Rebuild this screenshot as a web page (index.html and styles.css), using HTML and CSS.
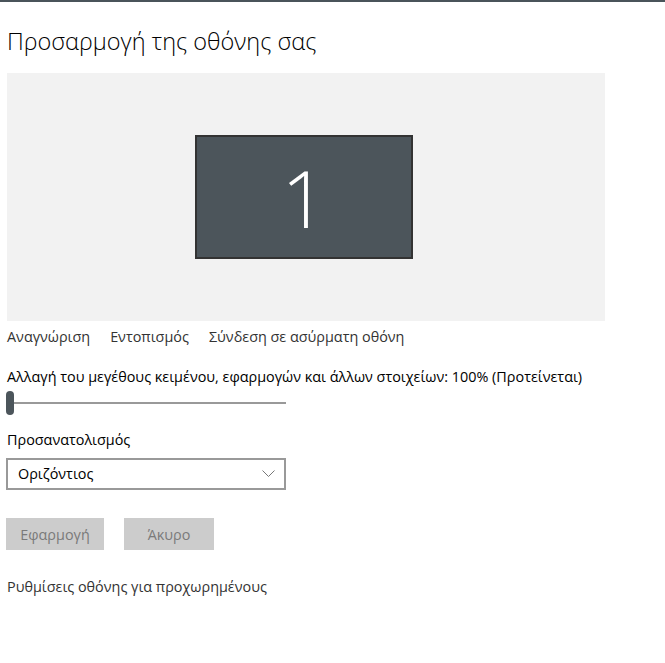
FILE: index.html
```html
<!DOCTYPE html>
<html lang="el">
<head>
    <meta charset="UTF-8">
    <meta name="viewport" content="width=device-width, initial-scale=1.0">
    <title>Οθόνη</title>
    <link rel="stylesheet" href="styles.css">
</head>
<body>
    <div class="top-line"></div>

    <main class="display-page">
        <h1 class="page-title">Προσαρμογή της οθόνης σας</h1>

        <div class="preview">
            <div class="monitor">1</div>
        </div>

        <nav class="preview-links">
            <a href="#">Αναγνώριση</a>
            <a href="#">Εντοπισμός</a>
            <a href="#">Σύνδεση σε ασύρματη οθόνη</a>
        </nav>

        <p class="scale-label">Αλλαγή του μεγέθους κειμένου, εφαρμογών και άλλων στοιχείων: 100% (Προτείνεται)</p>
        <div class="slider">
            <span class="slider-thumb"></span>
            <span class="slider-track"></span>
        </div>

        <p class="field-label">Προσανατολισμός</p>
        <div class="dropdown">
            <span>Οριζόντιος</span>
            <svg width="13" height="7" viewBox="0 0 13 7"><path d="M0.5 0.5 L6.5 6.5 L12.5 0.5" fill="none" stroke="#777" stroke-width="1"/></svg>
        </div>

        <div class="actions">
            <button disabled>Εφαρμογή</button>
            <button disabled>Άκυρο</button>
        </div>

        <a href="#" class="advanced-link">Ρυθμίσεις οθόνης για προχωρημένους</a>
    </main>
</body>
</html>
```

FILE: styles.css
```css
body {
    margin: 0;
    font-family: "Open Sans", "Noto Sans", sans-serif;
    font-size: 14.4px;
    color: #000;
    background: #fff;
}

.top-line {
    height: 2px;
    background-color: #4a545a;
}

.display-page {
    padding: 0 0 0 7px;
}

.page-title {
    margin: 24px 0 17px 0;
    font-size: 23.5px;
    font-weight: 300;
    line-height: 30px;
}

.preview {
    width: 598px;
    height: 248px;
    background-color: #f2f2f2;
    display: flex;
    justify-content: center;
    align-items: center;
}

.monitor {
    width: 214px;
    height: 120px;
    margin-right: 4px;
    border: 2px solid #333;
    background-color: #4c555b;
    color: #fff;
    font-size: 80px;
    font-weight: 300;
    display: flex;
    justify-content: center;
    align-items: center;
    line-height: 1;
}

.preview-links {
    display: flex;
    gap: 20px;
    margin-top: 6px;
    line-height: 20px;
}

.preview-links a,
.advanced-link {
    color: #333;
    text-decoration: none;
}

.scale-label {
    margin: 20px 0 0 0;
    line-height: 20px;
}

.slider {
    display: flex;
    align-items: center;
    width: 280px;
    height: 24px;
    margin: 4px 0 0 -1px;
}

.slider-thumb {
    width: 8px;
    height: 24px;
    border-radius: 4px;
    background-color: #4c555b;
}

.slider-track {
    flex: 1;
    height: 2px;
    background-color: #999;
}

.field-label {
    margin: 15px 0 0 0;
    line-height: 20px;
}

.dropdown {
    box-sizing: border-box;
    width: 280px;
    height: 32px;
    margin: 8px 0 0 -1px;
    border: 2px solid #999;
    display: flex;
    align-items: center;
    justify-content: space-between;
    padding: 0 9px 1px 10px;
}

.actions {
    display: flex;
    gap: 20px;
    margin: 28px 0 0 -1px;
}

.actions button {
    height: 32px;
    padding: 0 14px;
    min-width: 90px;
    border: none;
    background-color: #ccc;
    color: #7a7a7a;
    font-family: inherit;
    font-size: 14.4px;
}

.actions button:first-child {
    width: 98px;
}

.advanced-link {
    display: block;
    margin-top: 27px;
    line-height: 20px;
}
```
